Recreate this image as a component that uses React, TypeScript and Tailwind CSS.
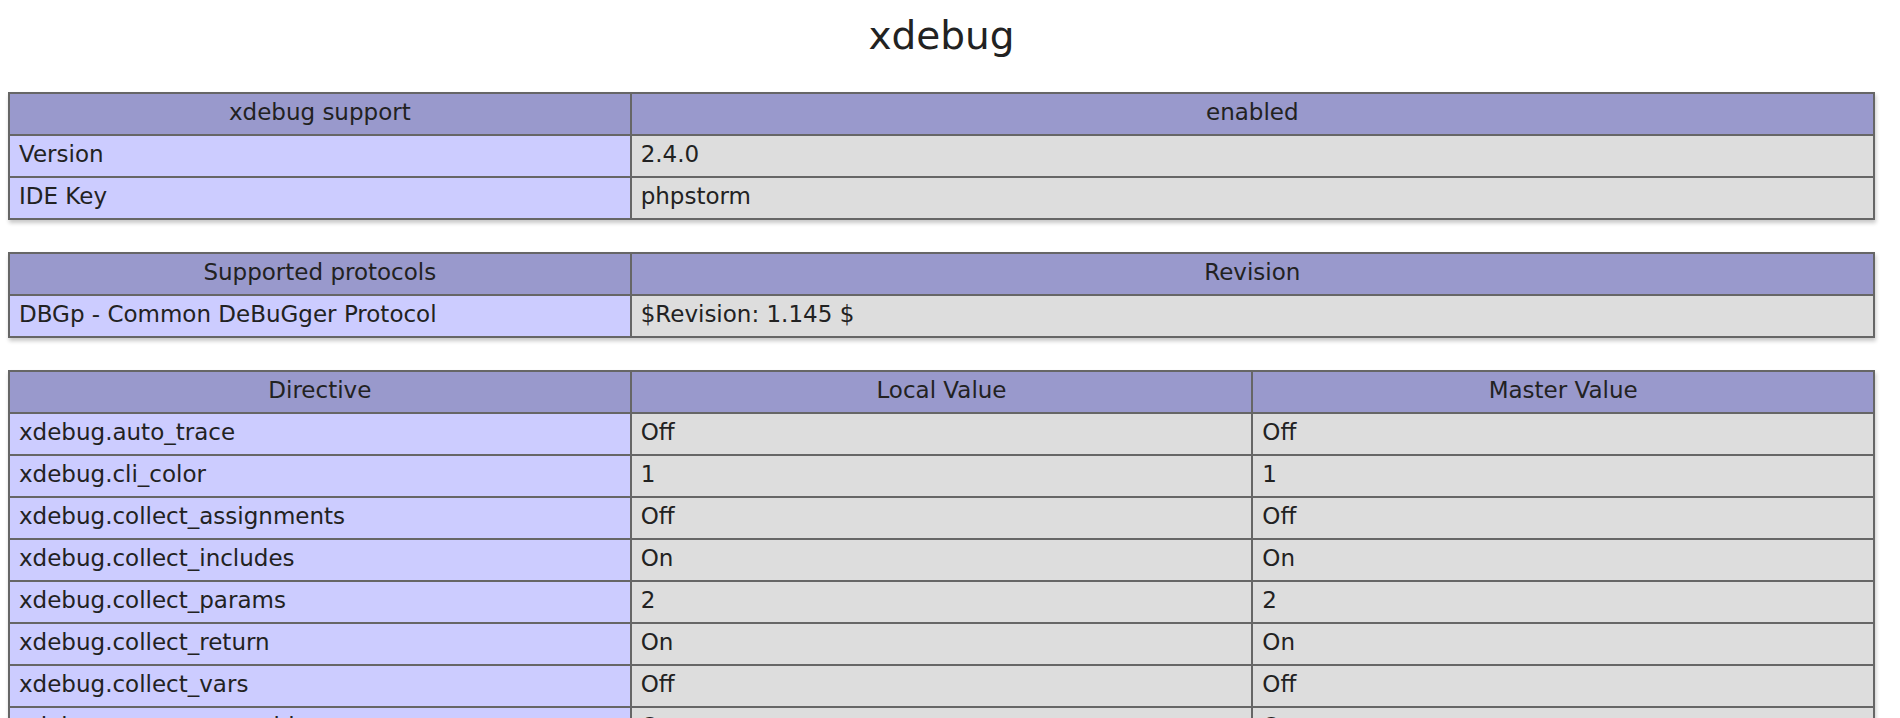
import React from 'react';

const directives: [string, string, string][] = [
  ['xdebug.auto_trace', 'Off', 'Off'],
  ['xdebug.cli_color', '1', '1'],
  ['xdebug.collect_assignments', 'Off', 'Off'],
  ['xdebug.collect_includes', 'On', 'On'],
  ['xdebug.collect_params', '2', '2'],
  ['xdebug.collect_return', 'On', 'On'],
  ['xdebug.collect_vars', 'Off', 'Off'],
  ['xdebug.coverage_enable', 'On', 'On'],
  ['xdebug.default_enable', 'On', 'On'],
  ['xdebug.dump.COOKIE', 'no value', 'no value'],
];

const th = 'border-2 border-[#666] bg-[#9999cc] px-[9px] pt-[5px] pb-[9px] text-center font-normal leading-[26px]';
const tdKey = 'border-2 border-[#666] bg-[#ccccff] px-[9px] pt-[5px] pb-[9px] text-left leading-[26px]';
const tdVal = 'border-2 border-[#666] bg-[#dddddd] px-[9px] pt-[5px] pb-[9px] text-left leading-[26px]';
const table = 'w-full table-fixed border-collapse shadow-[1px_3px_4px_#c8c8c8] mb-[32px]';

function InfoTable({ head, rows }: { head: string[]; rows: string[][] }) {
  const cols = head.length;
  return (
    <table className={table}>
      <thead>
        <tr>
          {head.map((h, i) => (
            <th
              key={i}
              className={th}
              style={cols === 2 && i === 0 ? { width: '33.333%' } : undefined}
            >
              {h}
            </th>
          ))}
        </tr>
      </thead>
      <tbody>
        {rows.map((r, i) => (
          <tr key={i}>
            {r.map((c, j) => (
              <td key={j} className={j === 0 ? tdKey : tdVal}>
                {c}
              </td>
            ))}
          </tr>
        ))}
      </tbody>
    </table>
  );
}

export default function App() {
  return (
    <div
      className="h-[718px] w-[1900px] overflow-hidden bg-white text-[#222] text-[23px]"
      style={{ fontFamily: '"DejaVu Sans", sans-serif' }}
    >
      <div className="w-[1883px] px-2 pt-[13px]">
        <h1 className="mb-[34px] text-center text-[39px] leading-[45px] font-normal">xdebug</h1>
        <InfoTable
          head={['xdebug support', 'enabled']}
          rows={[
            ['Version', '2.4.0'],
            ['IDE Key', 'phpstorm'],
          ]}
        />
        <InfoTable
          head={['Supported protocols', 'Revision']}
          rows={[['DBGp - Common DeBuGger Protocol', '$Revision: 1.145 $']]}
        />
        <InfoTable head={['Directive', 'Local Value', 'Master Value']} rows={directives} />
      </div>
    </div>
  );
}
